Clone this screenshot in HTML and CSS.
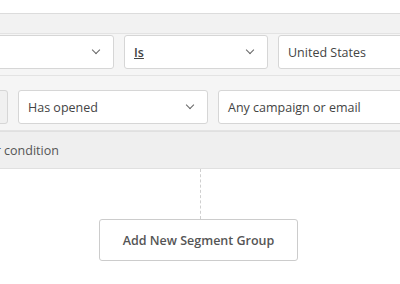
FILE: index.html
```html
<!DOCTYPE html>
<html lang="en">
<head>
    <meta charset="UTF-8">
    <meta name="viewport" content="width=device-width, initial-scale=1.0">
    <title>Segment builder</title>
    <link rel="stylesheet" href="styles.css">
</head>
<body>
    <div class="segment-group">
        <div class="group-head"></div>

        <div class="condition condition-first">
            <div class="select select-field">
                <span class="select-value"></span>
                <span class="chevron"></span>
            </div>
            <div class="select select-operator">
                <span class="select-value underline">Is</span>
                <span class="chevron"></span>
            </div>
            <div class="select select-input">
                <span class="select-value">United States</span>
            </div>
        </div>

        <div class="condition condition-second">
            <div class="select select-toggle"></div>
            <div class="select select-action">
                <span class="select-value">Has opened</span>
                <span class="chevron"></span>
            </div>
            <div class="select select-input">
                <span class="select-value">Any campaign or email</span>
            </div>
        </div>

        <div class="add-condition">
            <span class="add-condition-text">Add another condition</span>
        </div>
    </div>

    <div class="connector"></div>

    <div class="actions">
        <button class="btn">Add New Segment Group</button>
    </div>
</body>
</html>
```

FILE: styles.css
```css
* {
    margin: 0;
    padding: 0;
    box-sizing: border-box;
}

body {
    font-family: "Open Sans", sans-serif;
    background: #fff;
    color: #444;
    padding-top: 13px;
    overflow: hidden;
    width: 400px;
}

.segment-group {
    background: #f5f5f5;
    border-top: 1px solid #dcdcdc;
    border-bottom: 1px solid #e0e0e0;
}

.group-head {
    height: 20px;
    background: #f2f2f2;
    border-bottom: 1px solid #e3e3e3;
}

.condition {
    display: flex;
    gap: 10px;
    border-bottom: 1px solid #e3e3e3;
}

.condition-first {
    padding: 1px 0 6px;
    margin-left: -36px;
}

.condition-second {
    padding: 14px 0 6px;
    margin-left: -32px;
}

.select {
    height: 34px;
    background: #fff;
    border: 1px solid #d6d6d6;
    border-radius: 3px;
    display: flex;
    align-items: center;
    justify-content: space-between;
    padding: 0 14px 0 9px;
    flex-shrink: 0;
    font-size: 12.5px;
}

.select-field {
    width: 150px;
}

.select-operator {
    width: 144px;
}

.select-input {
    width: 200px;
}

.select-toggle {
    width: 40px;
    background: #f0f0f0;
}

.select-action {
    width: 190px;
}

.underline {
    text-decoration: underline;
    font-weight: 600;
}

.chevron {
    width: 6px;
    height: 6px;
    border-right: 1.5px solid #666;
    border-bottom: 1.5px solid #666;
    transform: rotate(45deg);
    margin-top: -4px;
}

.add-condition {
    height: 37px;
    background: #efefef;
    border-top: 1px solid #e0e0e0;
    display: flex;
    align-items: center;
    overflow: hidden;
    font-size: 12.5px;
    color: #555;
}

.add-condition-text {
    white-space: nowrap;
    margin-left: -72px;
}

.connector {
    width: 0;
    height: 50px;
    margin: 0 auto;
    border-left: 1px dashed #cfcfcf;
}

.actions {
    display: flex;
    justify-content: center;
}

.btn {
    width: 199px;
    height: 42px;
    margin-right: 3px;
    background: #fff;
    border: 1px solid #ccc;
    border-radius: 3px;
    font-family: "Open Sans", sans-serif;
    font-size: 12.5px;
    font-weight: 600;
    color: #555;
}
```
